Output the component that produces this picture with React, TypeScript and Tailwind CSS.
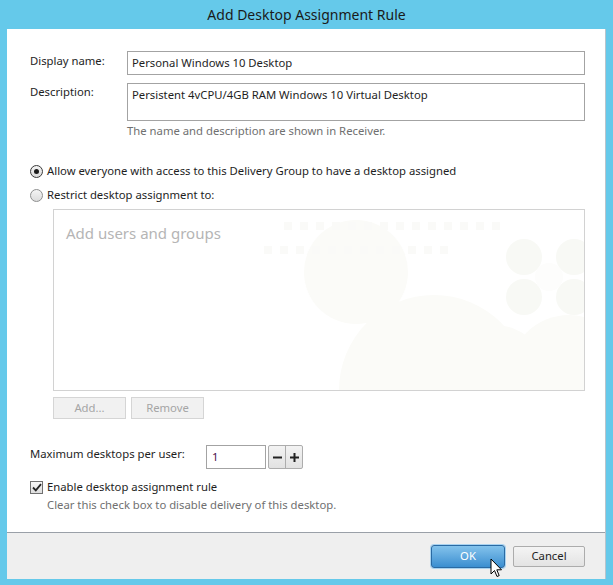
import React from 'react';

const font = { fontFamily: '"Noto Sans", "Open Sans", Arial, sans-serif' };

// --- SMALL WINDOWS 8 STYLE CONTROLS ---

const Radio: React.FC<{ checked?: boolean }> = ({ checked }) => (
  <span
    className={`w-[13px] h-[13px] rounded-full border flex items-center justify-center shrink-0 bg-gradient-to-b from-[#f4f4f4] to-[#dcdcdc] ${
      checked ? 'border-[#3b3b3b]' : 'border-[#8e8f8f]'
    }`}
  >
    {checked && <span className="w-[5px] h-[5px] rounded-full bg-[#1c1c1c]" />}
  </span>
);

const Checkbox: React.FC = () => (
  <span className="w-[13px] h-[13px] border border-[#707070] bg-gradient-to-b from-[#f6f6f6] to-[#dedede] flex items-center justify-center shrink-0">
    <svg width="10" height="9" viewBox="0 0 10 9">
      <path d="M1 4.5 L3.8 7.3 L9 1.2" fill="none" stroke="#222" strokeWidth="1.8" />
    </svg>
  </span>
);

const Watermark: React.FC = () => (
  <svg className="absolute inset-0 pointer-events-none" width="530" height="180" viewBox="0 0 530 180">
    <g fill="#fbfbf8">
      <circle cx="302" cy="62" r="52" />
      <circle cx="380" cy="180" r="95" />
      <circle cx="515" cy="165" r="60" />
      <circle cx="440" cy="170" r="55" />
    </g>
    <g fill="#f8f9f5">
      <circle cx="470" cy="47" r="18" />
      <circle cx="520" cy="47" r="18" />
      <circle cx="470" cy="87" r="18" />
      <circle cx="520" cy="87" r="18" />
    </g>
    <circle cx="495" cy="67" r="14" fill="#fdfdfc" />
    <g fill="#fafaf8">
      {Array.from({ length: 14 }).map((_, i) => (
        <rect key={i} x={230 + i * 16} y="12" width="8" height="8" />
      ))}
      {Array.from({ length: 12 }).map((_, i) => (
        <rect key={'b' + i} x={210 + i * 16} y="36" width="8" height="8" />
      ))}
    </g>
  </svg>
);

// --- MAIN DIALOG ---

const App: React.FC = () => {
  return (
    <div className="w-[613px] h-[585px] bg-[#65c9ea] flex flex-col text-[11.3px] text-[#1e1e1e] relative" style={font}>
      <div className="h-[29px] flex items-center justify-center text-[14px] text-[#1a1a1a] pb-[1px]">
        Add Desktop Assignment Rule
      </div>

      <div className="ml-[7px] w-[599px] flex-1 flex flex-col bg-white border-r border-[#b8c4cc]">
        <div className="flex-1 pt-[22px] pl-[23px] pr-[20px] flex flex-col">
          <div className="flex items-start">
            <span className="w-[97px] pt-[2px]">Display name:</span>
            <div className="flex-1 h-[24px] border border-[#a3a3a3] px-[4px] flex items-center">Personal Windows 10 Desktop</div>
          </div>
          <div className="flex items-start mt-[8px]">
            <span className="w-[97px] pt-[1px]">Description:</span>
            <div className="flex-1 h-[38px] border border-[#a3a3a3] px-[4px] pt-[3px]">
              Persistent 4vCPU/4GB RAM Windows 10 Virtual Desktop
            </div>
          </div>
          <div className="ml-[97px] mt-[1px] text-[#707070] leading-[17px]">The name and description are shown in Receiver.</div>

          <div className="mt-[24px] flex items-center gap-[4px] h-[17px]">
            <Radio checked />
            <span>Allow everyone with access to this Delivery Group to have a desktop assigned</span>
          </div>
          <div className="mt-[7px] flex items-center gap-[4px] h-[17px]">
            <Radio />
            <span>Restrict desktop assignment to:</span>
          </div>

          <div className="ml-[23px] mt-[5px] h-[182px] border border-[#d2d2d2] relative overflow-hidden">
            <Watermark />
            <div className="relative pl-[12px] pt-[12px] text-[15px] text-[#b5b5b5]">Add users and groups</div>
          </div>
          <div className="ml-[23px] mt-[6px] flex gap-[5px]">
            <button className="w-[73px] h-[22px] border border-[#d5d5d5] bg-[#f1f1f1] text-[#a5a5a5]">Add...</button>
            <button className="w-[73px] h-[22px] border border-[#d5d5d5] bg-[#f1f1f1] text-[#a5a5a5]">Remove</button>
          </div>

          <div className="mt-[26px] flex items-start">
            <span className="w-[176px] pt-[1px]">Maximum desktops per user:</span>
            <div className="w-[60px] h-[24px] border border-[#a3a3a3] px-[5px] flex items-center text-[#4b1250]">1</div>
            <div className="ml-[2px] flex h-[24px] border border-[#adadad] rounded-[2px] bg-gradient-to-b from-[#f3f3f3] to-[#e2e2e2]">
              <span className="w-[17px] flex items-center justify-center border-r border-[#adadad]">
                <svg width="9" height="9" viewBox="0 0 9 9"><rect x="0" y="3.5" width="9" height="2" fill="#222" /></svg>
              </span>
              <span className="w-[16px] flex items-center justify-center">
                <svg width="9" height="9" viewBox="0 0 9 9"><rect x="0" y="3.5" width="9" height="2" fill="#222" /><rect x="3.5" y="0" width="2" height="9" fill="#222" /></svg>
              </span>
            </div>
          </div>

          <div className="mt-[10px] flex items-center gap-[4px] h-[17px]">
            <Checkbox />
            <span>Enable desktop assignment rule</span>
          </div>
          <div className="ml-[17px] text-[#707070] leading-[17px]">Clear this check box to disable delivery of this desktop.</div>
        </div>

        <div className="h-[47px] border-t border-[#9aa0a8] bg-[#efefef] flex justify-end items-start pt-[12px] pr-[20px] gap-[8px]">
          <button className="w-[74px] h-[23px] rounded-[3px] border border-[#2a6aa3] bg-gradient-to-b from-[#83c3ec] to-[#3a8ed0] text-white shadow-[0_0_0_1px_#a9d3f0]">
            OK
          </button>
          <button className="w-[72px] h-[21px] mt-[1px] rounded-[2px] border border-[#acacac] bg-gradient-to-b from-[#f4f4f4] to-[#e3e3e3]">
            Cancel
          </button>
        </div>
      </div>
      <div className="h-[6px]" />

      <svg className="absolute left-[490px] top-[558px]" width="14" height="21" viewBox="0 0 14 21">
        <path d="M1 1 L1 16 L4.5 12.5 L7 18.5 L9.2 17.6 L6.8 11.8 L11.5 11.8 Z" fill="#fff" stroke="#000" strokeWidth="1" strokeLinejoin="round" />
      </svg>
    </div>
  );
};

export default App;
